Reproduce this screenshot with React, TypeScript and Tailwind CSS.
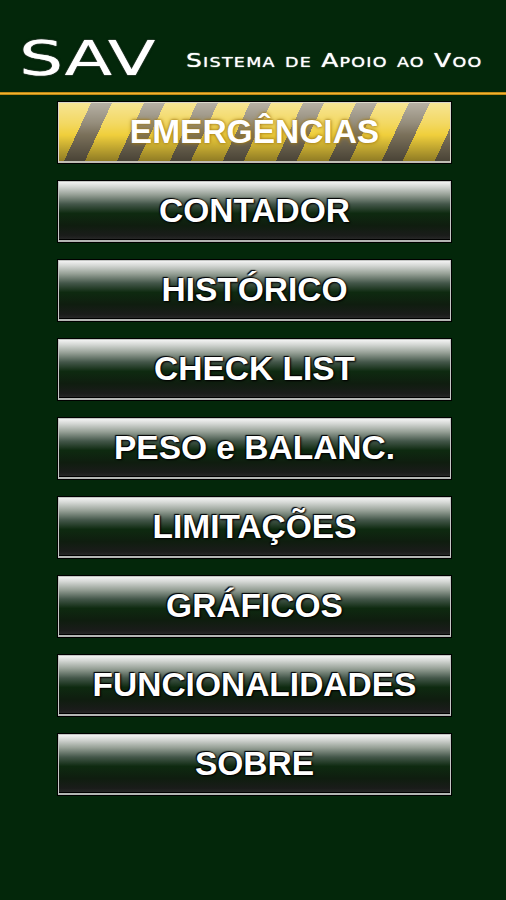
import React from "react";

const items: string[] = [
    "CONTADOR",
    "HISTÓRICO",
    "CHECK LIST",
    "PESO e BALANC.",
    "LIMITAÇÕES",
    "GRÁFICOS",
    "FUNCIONALIDADES",
    "SOBRE",
];

const MenuButton: React.FC<{ label: string }> = ({ label }) => (
    <button className="w-[393px] h-[61px] flex items-center justify-center border border-[#c4c6c4] border-b-2 border-b-[#b4b6b4] shadow-[0_0_0_1px_#000,inset_0_-1px_0_#000] bg-[linear-gradient(to_bottom,#f2f2f2_0%,#d4d7d4_8%,#96a096_22%,#44574a_38%,#0e2a10_54%,#0f1d0f_75%,#1a1c1a_92%,#2a2a2a_100%)]">
        <span className="font-['Liberation_Sans',Arial,sans-serif] font-bold text-[33.5px] leading-none text-white [text-shadow:0_0_2px_#000,1px_1px_2px_#000,-1px_-1px_1px_#000]">
            {label}
        </span>
    </button>
);

const EmergencyButton: React.FC = () => (
    <button className="w-[393px] h-[61px] flex items-center justify-center border border-[#d8d6cc] border-b-2 border-b-[#c0beb4] shadow-[0_0_0_1px_#000] bg-[image:linear-gradient(to_bottom,rgba(255,255,255,0.45)_0%,rgba(255,255,255,0.2)_35%,rgba(0,0,0,0)_55%,rgba(0,0,0,0.4)_100%),repeating-linear-gradient(115deg,#f0cf3c_0px,#f0cf3c_29px,#7a705a_29px,#7a705a_48px)]">
        <span className="font-['Liberation_Sans',Arial,sans-serif] font-bold text-[33.5px] leading-none text-white [text-shadow:0_0_4px_#a8821a,0_0_2px_#906c10]">
            EMERGÊNCIAS
        </span>
    </button>
);

export default function App() {
    return (
        <main className="w-[506px] min-h-[900px] bg-[#03270a] flex flex-col overflow-hidden">
            <header className="h-[92px] flex items-start pl-[19px]">
                <div className="w-[167px] mt-[34px]">
                    <span className="block origin-left scale-x-[1.45] font-['DejaVu_Sans',sans-serif] text-[48px] leading-[48px] text-white [text-shadow:0_0_1px_#fff,0_0_2px_#000]">
                        SAV
                    </span>
                </div>
                <div className="mt-[50px]">
                    <span className="block origin-left scale-x-[1.25] whitespace-nowrap font-['DejaVu_Sans',sans-serif] text-[20px] leading-[20px] tracking-[1px] [font-variant:small-caps] text-white [text-shadow:0_0_1px_#fff]">
                        Sistema de Apoio ao Voo
                    </span>
                </div>
            </header>
            <div className="h-[3px] bg-[linear-gradient(to_bottom,#a8720e,#f0b42c,#a8720e)]" />
            <section className="flex flex-col gap-[18px] pl-[58px] pt-[7px]">
                <EmergencyButton />
                {items.map((label) => (
                    <MenuButton key={label} label={label} />
                ))}
            </section>
        </main>
    );
}
